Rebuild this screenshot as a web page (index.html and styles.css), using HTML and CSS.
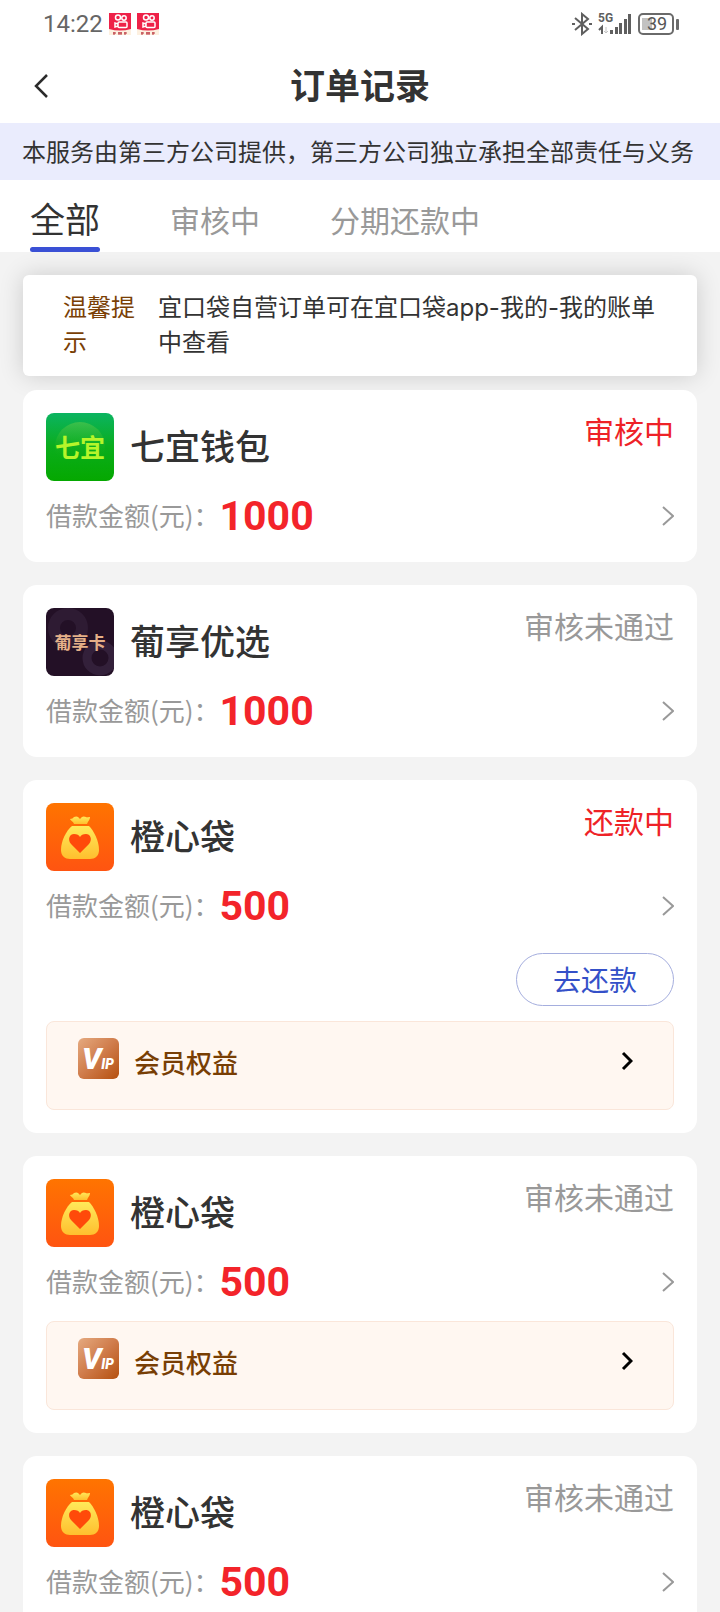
FILE: index.html
```html
<!DOCTYPE html>
<html lang="zh-CN">
<head>
<meta charset="UTF-8">
<meta name="viewport" content="width=device-width, initial-scale=1">
<title>订单记录</title>
<link rel="stylesheet" href="styles.css">
</head>
<body>

<!-- 图标 -->
<svg class="sprite" aria-hidden="true">
  <defs>
    <linearGradient id="orangeBg" x1="0" y1="0" x2="0" y2="1">
      <stop offset="0" stop-color="#ff7400"/>
      <stop offset="1" stop-color="#ff5411"/>
    </linearGradient>
    <linearGradient id="bagFill" x1="0" y1="0" x2="0" y2="1">
      <stop offset="0" stop-color="#ffe95a"/>
      <stop offset="1" stop-color="#ffbf2e"/>
    </linearGradient>
    <linearGradient id="greenBg" x1="0" y1="0" x2="0" y2="1">
      <stop offset="0" stop-color="#0bb461"/>
      <stop offset="0.5" stop-color="#0aad1c"/>
      <stop offset="1" stop-color="#05a800"/>
    </linearGradient>
    <linearGradient id="greenBall" x1="0" y1="0" x2="0" y2="1">
      <stop offset="0" stop-color="#5cc84a" stop-opacity="0.6"/>
      <stop offset="0.7" stop-color="#1cb01a" stop-opacity="0"/>
    </linearGradient>
    <linearGradient id="vipBg" x1="0" y1="0" x2="1" y2="1">
      <stop offset="0" stop-color="#e5aa80"/>
      <stop offset="0.5" stop-color="#cf7b4a"/>
      <stop offset="1" stop-color="#b5500f"/>
    </linearGradient>
  </defs>
  <symbol id="bag" viewBox="0 0 68 68">
    <rect width="68" height="68" fill="url(#orangeBg)"/>
    <path d="M24 16c2 0 3-1 4-2 2-1 4-1 6 2 2-3 4-3 6-2 1 1 2 0 4 0 0 3-2 4-3 7H28c-1-3-3-3-4-5z" fill="url(#bagFill)"/>
    <path d="M26 23h17c5 5 10 15 10 24 0 6-4 9-9 9H24c-5 0-9-3-9-9 0-9 5-19 11-24z" fill="url(#bagFill)"/>
    <path d="M34 50L25 41C21 36 24 31 28 31c3 0 5 1 6 3 1-2 3-3 6-3 4 0 7 5 3 10z" fill="#ff4a0a"/>
  </symbol>
  <symbol id="arrow" viewBox="0 0 12 20">
    <path d="M1 1l10 9-10 9" fill="none" stroke="currentColor" stroke-width="2"/>
  </symbol>
  <symbol id="arrowBold" viewBox="0 0 12 20">
    <path d="M2 2l8 8-8 8" fill="none" stroke="currentColor" stroke-width="3"/>
  </symbol>
  <symbol id="kuai" viewBox="0 0 22 22">
    <path d="M0 0h22v18H0z" fill="#ee2148"/>
    <path d="M0 16q11 3 22 0v6H0z" fill="#fdf0e0"/>
    <g fill="none" stroke="#fff" stroke-width="1.5">
      <circle cx="9" cy="4.500" r="2.500"/>
      <circle cx="15" cy="5" r="2.200"/>
      <rect x="9" y="9" width="9" height="5.500" rx="1"/>
      <path d="M9 11l-3-1v4l3-1"/>
    </g>
    <path d="M4 20h3M5 19v3M9 20h4M10 19v3M12 19v3M15 20h3M16 19v3" stroke="#b8323c" fill="none"/>
  </symbol>
</svg>

<div class="status-bar">
  <div class="status-left">
    <span>14:22</span>
    <svg class="app-icon"><use href="#kuai"/></svg>
    <svg class="app-icon"><use href="#kuai"/></svg>
  </div>
  <div class="status-right">
    <svg width="20" height="24" viewBox="0 0 20 24" fill="none" stroke="#5f5f5f" stroke-width="2">
      <path d="M3 6l13 11-6 5V2l6 5L3 18"/>
      <path d="M0 12h3M17 12h3"/>
    </svg>
    <svg width="34" height="24" viewBox="0 0 34 24">
      <text x="0" y="10" class="net">5G</text>
      <path d="M1 18l3-3v7" fill="none" stroke="#5f5f5f" stroke-width="2"/>
      <path d="M8 15v6M6 19l2 2 2-2" fill="none" stroke="#c4c4c4"/>
      <path d="M12 18h3v4h-3zM17 15h3v7h-3zM21 11h3v11h-3zM26 7h3v15h-3zM30 2h3v20h-3z" fill="#5f5f5f"/>
    </svg>
    <svg width="41" height="22" viewBox="0 0 41 22">
      <rect x="4" y="5" width="10" height="12" fill="#c2c2c2"/>
      <rect x="1" y="1" width="34" height="20" rx="4" fill="none" stroke="#6a6a6a" stroke-width="2"/>
      <rect x="38" y="6" width="3" height="11" rx="1" fill="#6a6a6a"/>
      <text x="19" y="17" class="battery">39</text>
    </svg>
  </div>
</div>

<header class="header">
  <button class="back" aria-label="返回">
    <svg width="14" height="24" viewBox="0 0 14 24"><path d="M13 1L2 12l11 11" fill="none" stroke="#2b2b2b" stroke-width="2.500"/></svg>
  </button>
  <h1>订单记录</h1>
</header>

<p class="notice">本服务由第三方公司提供，第三方公司独立承担全部责任与义务</p>

<nav class="tabs">
  <button class="tab active">全部</button>
  <button class="tab">审核中</button>
  <button class="tab">分期还款中</button>
</nav>

<main class="content">
  <div class="tips">
    <span class="tips-label">温馨提示</span>
    <p>宜口袋自营订单可在宜口袋app-我的-我的账单中查看</p>
  </div>

  <section class="card">
    <div class="card-top">
      <svg class="logo" viewBox="0 0 68 68">
        <rect width="68" height="68" fill="url(#greenBg)"/>
        <circle cx="34" cy="34" r="25" fill="url(#greenBall)"/>
        <text x="34" y="44" class="logo-green">七宜</text>
      </svg>
      <h2>七宜钱包</h2>
      <span class="state red">审核中</span>
    </div>
    <a class="amount-row" href="#">
      <span class="label">借款金额(元)：</span>
      <strong>1000</strong>
      <svg class="arrow"><use href="#arrow"/></svg>
    </a>
  </section>

  <section class="card">
    <div class="card-top">
      <svg class="logo" viewBox="0 0 68 68">
        <rect width="68" height="68" fill="#231026"/>
        <circle cx="22" cy="20" r="14" fill="none" stroke="#2e1b33" stroke-width="12"/>
        <circle cx="54" cy="50" r="13" fill="none" stroke="#33203a" stroke-width="9"/>
        <text x="34" y="41" class="logo-dark">葡享卡</text>
      </svg>
      <h2>葡享优选</h2>
      <span class="state">审核未通过</span>
    </div>
    <a class="amount-row" href="#">
      <span class="label">借款金额(元)：</span>
      <strong>1000</strong>
      <svg class="arrow"><use href="#arrow"/></svg>
    </a>
  </section>

  <section class="card">
    <div class="card-top">
      <svg class="logo"><use href="#bag"/></svg>
      <h2>橙心袋</h2>
      <span class="state red">还款中</span>
    </div>
    <a class="amount-row" href="#">
      <span class="label">借款金额(元)：</span>
      <strong>500</strong>
      <svg class="arrow"><use href="#arrow"/></svg>
    </a>
    <button class="repay">去还款</button>
    <a class="vip-row" href="#">
      <svg class="vip-icon" viewBox="0 0 42 42">
        <rect width="42" height="42" rx="6" fill="url(#vipBg)"/>
        <text x="4" y="32" class="vip-v">V<tspan class="vip-ip">IP</tspan></text>
      </svg>
      <span>会员权益</span>
      <svg class="arrow-bold"><use href="#arrowBold"/></svg>
    </a>
  </section>

  <section class="card">
    <div class="card-top">
      <svg class="logo"><use href="#bag"/></svg>
      <h2>橙心袋</h2>
      <span class="state">审核未通过</span>
    </div>
    <a class="amount-row" href="#">
      <span class="label">借款金额(元)：</span>
      <strong>500</strong>
      <svg class="arrow"><use href="#arrow"/></svg>
    </a>
    <a class="vip-row" href="#">
      <svg class="vip-icon" viewBox="0 0 42 42">
        <rect width="42" height="42" rx="6" fill="url(#vipBg)"/>
        <text x="4" y="32" class="vip-v">V<tspan class="vip-ip">IP</tspan></text>
      </svg>
      <span>会员权益</span>
      <svg class="arrow-bold"><use href="#arrowBold"/></svg>
    </a>
  </section>

  <section class="card">
    <div class="card-top">
      <svg class="logo"><use href="#bag"/></svg>
      <h2>橙心袋</h2>
      <span class="state">审核未通过</span>
    </div>
    <a class="amount-row" href="#">
      <span class="label">借款金额(元)：</span>
      <strong>500</strong>
      <svg class="arrow"><use href="#arrow"/></svg>
    </a>
  </section>
</main>

</body>
</html>
```
FILE: styles.css
```css
* {
  box-sizing: border-box;
}
html {
  scrollbar-width: none;
}
body {
  margin: 0;
  background-color: #f3f3f3;
  color: #333;
  font-family: "Noto Sans CJK SC", sans-serif;
}
h1, h2, p {
  margin: 0;
}
button {
  border: none;
  background: none;
  padding: 0;
  font-family: inherit;
  cursor: pointer;
}
a {
  color: inherit;
  text-decoration: none;
}
svg {
  flex-shrink: 0;
}
.sprite {
  position: absolute;
  width: 0;
  height: 0;
}

/* 状态栏 */
.status-bar {
  display: flex;
  justify-content: space-between;
  align-items: center;
  height: 48px;
  padding: 0 41px 0 43px;
  background-color: #fff;
  color: #666;
  font-family: Roboto, sans-serif;
  font-size: 24px;
}
.status-left {
  display: flex;
  align-items: center;
  gap: 6px;
}
.status-right {
  display: flex;
  align-items: center;
  gap: 6px;
}
.app-icon {
  width: 22px;
  height: 22px;
}
.net {
  font-size: 12px;
  font-weight: bold;
  fill: #5f5f5f;
}
.battery {
  font-size: 18px;
  fill: #555;
  text-anchor: middle;
}

/* 标题 */
.header {
  display: grid;
  grid-template-columns: 60px 1fr 60px;
  align-items: center;
  height: 75px;
  background-color: #fff;
  text-align: center;
}
.header h1 {
  padding-bottom: 3px;
  font-size: 35px;
  line-height: 48px;
}
.back {
  display: flex;
  padding: 12px 0 12px 34px;
}
.notice {
  padding: 0 22px 2px;
  background-color: #eaecfd;
  font-size: 24px;
  line-height: 55px;
  white-space: nowrap;
}

/* 标签 */
.tabs {
  display: flex;
  gap: 70px;
  height: 72px;
  padding: 0 30px;
  background-color: #fff;
}
.tab {
  padding-top: 6px;
  color: #999;
  font-size: 30px;
}
.tab.active {
  position: relative;
  padding-top: 2px;
  color: #333;
  font-size: 35px;
}
.tab.active::after {
  content: "";
  position: absolute;
  left: 0;
  right: 0;
  bottom: 0;
  height: 5px;
  border-radius: 3px;
  background-color: #3a50d5;
}

/* 订单列表 */
.content {
  padding: 23px;
}
.tips {
  display: flex;
  gap: 23px;
  margin-bottom: 14px;
  padding: 15px 34px 16px 40px;
  border-radius: 6px;
  background-color: #fff;
  box-shadow: 0 0 24px rgba(0, 0, 0, 0.16);
  font-family: Inter, "Noto Sans CJK SC", sans-serif;
  font-size: 24px;
  line-height: 35px;
}
.tips-label {
  flex: 0 0 72px;
  color: #7a3f05;
}
.card {
  position: relative;
  margin-bottom: 23px;
  padding: 23px 23px 11px;
  border-radius: 14px;
  background-color: #fff;
}
.card-top {
  display: flex;
  height: 68px;
}
.logo {
  width: 68px;
  height: 68px;
  border-radius: 8px;
}
.card-top h2 {
  margin-left: 16px;
  font-size: 35px;
  font-weight: 500;
  line-height: 64px;
}
.state {
  margin-left: auto;
  color: #999;
  font-size: 30px;
  line-height: 34px;
}
.red {
  color: #ee2227;
}
.amount-row {
  display: flex;
  align-items: center;
  height: 70px;
}
.label {
  padding-bottom: 3px;
  color: #999;
  font-size: 26px;
}
.amount-row strong {
  color: #f3242a;
  font-family: Roboto, sans-serif;
  font-size: 41px;
}
.arrow {
  width: 12px;
  height: 20px;
  margin-left: auto;
  color: #999;
}
.repay {
  display: block;
  margin: 12px 0 15px auto;
  padding: 0 36px;
  border: 1px solid #a5aede;
  border-radius: 27px;
  color: #3450c8;
  font-size: 28px;
  line-height: 51px;
}
.vip-row {
  display: flex;
  height: 89px;
  margin: 4px 0 12px;
  padding: 16px 40px 0 31px;
  border: 1px solid #fae6da;
  border-radius: 8px;
  background-color: #fff7f1;
  color: #783e04;
  font-size: 26px;
  font-weight: 500;
  line-height: 48px;
}
.vip-icon {
  width: 41px;
  height: 41px;
  margin-right: 15px;
}
.arrow-bold {
  width: 12px;
  height: 20px;
  margin: 13px 0 0 auto;
  color: #000;
}

/* 图标里的文字 */
.logo-green {
  fill: #b6f52a;
  font-size: 25px;
  font-weight: bold;
  text-anchor: middle;
}
.logo-dark {
  fill: #e5b088;
  font-size: 17px;
  font-weight: bold;
  text-anchor: middle;
}
.vip-v {
  fill: #fff;
  font-family: Roboto, sans-serif;
  font-size: 31px;
  font-style: italic;
  font-weight: 900;
}
.vip-ip {
  font-size: 14px;
}
```
